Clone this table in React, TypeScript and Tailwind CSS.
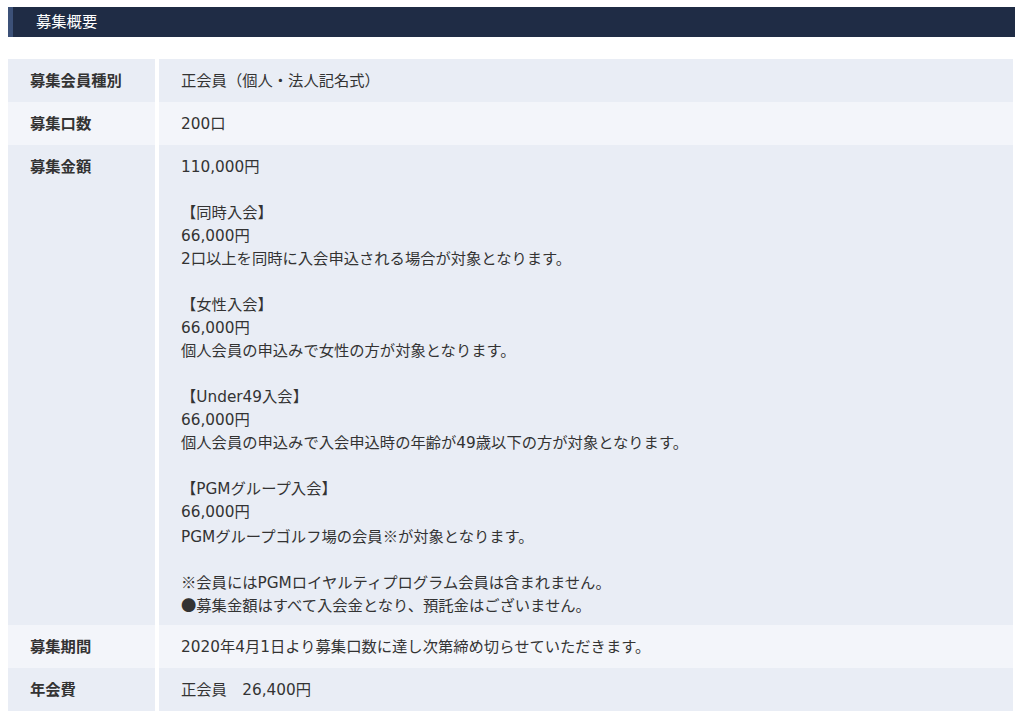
import React from "react";

const font = { fontFamily: '"DejaVu Sans", "Noto Sans CJK JP", sans-serif' };
const cjk = { fontFamily: '"Noto Sans CJK JP", sans-serif' };

type Row = { label: string; lines: string[]; dark: boolean };

const rows: Row[] = [
  { label: "募集会員種別", lines: ["正会員（個人・法人記名式）"], dark: true },
  { label: "募集口数", lines: ["200口"], dark: false },
  {
    label: "募集金額",
    lines: [
      "110,000円",
      "",
      "【同時入会】",
      "66,000円",
      "2口以上を同時に入会申込される場合が対象となります。",
      "",
      "【女性入会】",
      "66,000円",
      "個人会員の申込みで女性の方が対象となります。",
      "",
      "【Under49入会】",
      "66,000円",
      "個人会員の申込みで入会申込時の年齢が49歳以下の方が対象となります。",
      "",
      "【PGMグループ入会】",
      "66,000円",
      "PGMグループゴルフ場の会員※が対象となります。",
      "",
      "※会員にはPGMロイヤルティプログラム会員は含まれません。",
      "●募集金額はすべて入会金となり、預託金はございません。",
    ],
    dark: true,
  },
  { label: "募集期間", lines: ["2020年4月1日より募集口数に達し次第締め切らせていただきます。"], dark: false },
  { label: "年会費", lines: ["正会員　26,400円"], dark: true },
];

function Line({ text }: { text: string }) {
  const parts = text.split(/([●※])/);
  return (
    <div className="h-[23px] whitespace-nowrap">
      {parts.map((p, i) =>
        p === "●" || p === "※" ? (
          <span key={i} style={cjk}>
            {p}
          </span>
        ) : (
          <React.Fragment key={i}>{p}</React.Fragment>
        )
      )}
    </div>
  );
}

export default function App() {
  return (
    <div className="w-[1024px] h-[719px] bg-white overflow-hidden text-[#333]" style={font}>
      <div className="pt-[7px] pl-[8px] pr-[9px]">
        <div className="flex h-[30px] bg-[#1f2c45]">
          <div className="w-[5px] bg-[#3c5178]" />
          <div className="pl-[23px] pt-[2px] flex items-center text-[15.3px] text-white leading-none">募集概要</div>
        </div>
      </div>
      <div className="mt-[22px] ml-[8px] mr-[11px] flex flex-col">
        {rows.map((r) => (
          <div key={r.label} className="flex">
            <div
              className={`w-[147px] shrink-0 px-[22px] pt-[11px] pb-[9px] text-[15.3px] leading-[23px] font-bold ${
                r.dark ? "bg-[#e9edf5]" : "bg-[#f3f5fa]"
              }`}
            >
              {r.label}
            </div>
            <div className="w-[4px] shrink-0 bg-white" />
            <div
              className={`flex-1 px-[22px] pt-[11px] pb-[9px] text-[15.3px] leading-[23px] ${
                r.dark ? "bg-[#e9edf5]" : "bg-[#f3f5fa]"
              }`}
            >
              {r.lines.map((l, i) => (
                <Line key={i} text={l} />
              ))}
            </div>
          </div>
        ))}
      </div>
    </div>
  );
}
